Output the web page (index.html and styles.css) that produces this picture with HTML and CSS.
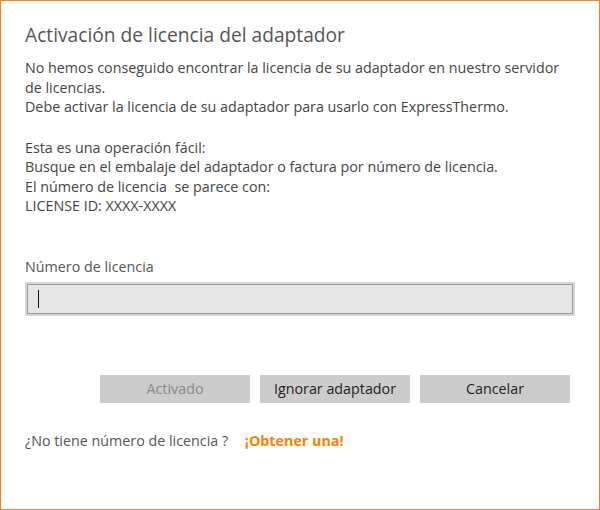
FILE: index.html
```html
<!DOCTYPE html>
<html lang="es">
<head>
    <meta charset="UTF-8">
    <meta name="viewport" content="width=device-width, initial-scale=1.0">
    <title>Activación de licencia</title>
    <link rel="stylesheet" href="styles.css">
</head>
<body>
    <div class="dialog">
        <h1>Activación de licencia del adaptador</h1>
        <p class="message">
            No hemos conseguido encontrar la licencia de su adaptador en nuestro servidor<br>
            de licencias.<br>
            Debe activar la licencia de su adaptador para usarlo con ExpressThermo.
        </p>
        <p class="message">
            Esta es una operación fácil:<br>
            Busque en el embalaje del adaptador o factura por número de licencia.<br>
            El número de licencia&nbsp; se parece con:<br>
            LICENSE ID: XXXX-XXXX
        </p>
        <label class="field-label" for="license">Número de licencia</label>
        <div class="field">
            <input type="text" id="license" class="field-input">
            <span class="caret"></span>
        </div>
        <div class="buttons">
            <button class="btn" disabled>Activado</button>
            <button class="btn">Ignorar adaptador</button>
            <button class="btn">Cancelar</button>
        </div>
        <div class="footer">
            ¿No tiene número de licencia ?
            <a href="#" class="get-link">¡Obtener una!</a>
        </div>
    </div>
</body>
</html>
```

FILE: styles.css
```css
body {
    margin: 0;
    background: white;
    font-family: "Open Sans", "Noto Sans", sans-serif;
}
.dialog {
    width: 600px;
    height: 510px;
    box-sizing: border-box;
    border: 1px solid #f08519;
    padding: 0 24px;
    color: #444;
    font-size: 14.3px;
    line-height: 19.5px;
}
h1 {
    font-size: 19.2px;
    font-weight: normal;
    color: #555;
    margin: 21px 0 10px;
    line-height: 26px;
}
.message {
    margin: 0 0 21px;
}
.field-label {
    display: block;
    margin-top: 41px;
    color: #555;
}
.field {
    position: relative;
    margin-top: 6px;
    width: 550px;
    height: 34px;
    box-sizing: border-box;
    border: 2px solid #d6d6d6;
}
.field-input {
    display: block;
    width: 100%;
    height: 100%;
    box-sizing: border-box;
    margin: 0;
    border: 1px solid #999;
    background: #e5e5e5;
    outline: none;
    font: inherit;
    padding: 0 10px;
}
.caret {
    position: absolute;
    left: 11px;
    top: 6px;
    width: 1px;
    height: 18px;
    background: #111;
}
.buttons {
    display: flex;
    justify-content: flex-end;
    gap: 10px;
    margin-top: 59px;
    padding-right: 5px;
}
.btn {
    width: 150px;
    height: 28px;
    border: none;
    background: #ccc;
    color: #222;
    font: inherit;
    font-size: 14.3px;
    padding: 0;
}
.btn:disabled {
    color: #888;
}
.footer {
    margin-top: 28px;
    color: #555;
}
.get-link {
    margin-left: 13px;
    color: #ff8000;
    font-weight: bold;
    text-decoration: none;
}
```
